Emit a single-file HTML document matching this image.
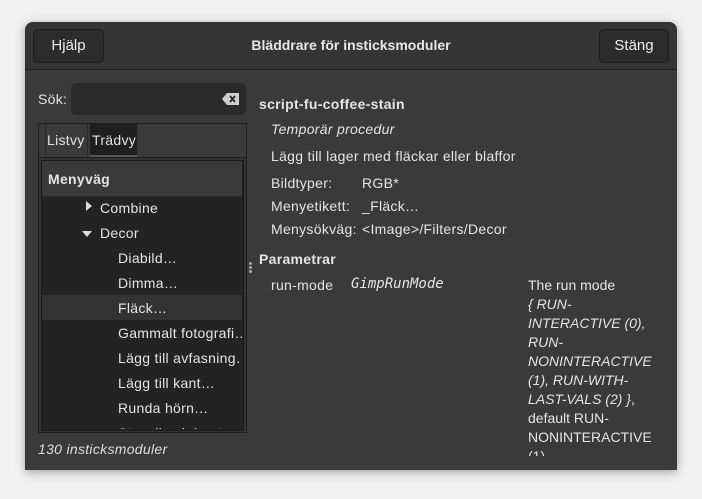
<!DOCTYPE html>
<html><head><meta charset="utf-8"><style>
body{margin:0;width:702px;height:499px;background:#f2f2f2;font-family:"Liberation Sans","DejaVu Sans",sans-serif;position:relative;overflow:hidden;color:#e4e4e4}
.win{position:absolute;left:25px;top:22px;width:652px;height:448px;background:#3a3a3a;border-radius:8px 8px 0 0;box-shadow:0 2px 10px rgba(0,0,0,.35);overflow:hidden}
.hdr{position:absolute;left:0;top:0;width:652px;height:47px;background:#353535;border-bottom:1px solid #1e1e1e}
.btn{position:absolute;top:7px;height:32px;border:1px solid #1c1c1c;border-radius:5px;background:#2c2c2c;font-size:15px;line-height:32px;text-align:center;color:#eee}
.title{position:absolute;left:0;right:0;top:15px;text-align:center;font-weight:bold;font-size:14px;color:#e8e8e8}
.a{position:absolute;white-space:nowrap}
.t{font-size:14px;letter-spacing:0.3px}
</style></head><body>
<div class="win">
<div class="hdr">
<div class="btn" style="left:8px;width:69px">Hjälp</div>
<div class="title">Bläddrare för insticksmoduler</div>
<div class="btn" style="left:574px;width:68px">Stäng</div>
</div>
<div class="a t" style="left:13px;top:69px">Sök:</div>
<div class="a" style="left:46px;top:61px;width:175px;height:32px;background:#2a2a2a;border-radius:5px"></div>
<svg class="a" style="left:197px;top:71px" width="17" height="12"><path d="M5 0H17V12H5L0 6Z" fill="#cfcfcf"/><path d="M8 3L13 9M13 3L8 9" stroke="#2a2a2a" stroke-width="1.8"/></svg>
<div class="a" style="left:13px;top:101px;width:207px;height:308px;border:1px solid #1e1e1e;background:#333"></div>
<div class="a" style="left:14px;top:102px;width:207px;height:33px;background:#3a3a3a;border-bottom:1px solid #1e1e1e"></div>
<div class="a" style="left:20px;top:102px;width:41px;height:33px;border-left:1px solid #2a2a2a;border-right:1px solid #2a2a2a"></div>
<div class="a t" style="left:22px;top:110px">Listvy</div>
<div class="a" style="left:65px;top:102px;width:47px;height:31px;background:#1f1f1f;border-bottom:2px solid #555"></div>
<div class="a t" style="left:67px;top:110px">Trädvy</div>
<div class="a" style="left:16px;top:138px;width:201px;height:269px;background:#232323;border:1px solid #1b1b1b"></div>
<div class="a" style="left:17px;top:139px;width:200px;height:35px;background:#3a3a3a;border-bottom:1px solid #2a2a2a"></div>
<div class="a t" style="left:23px;top:149px;font-weight:bold">Menyväg</div>
<div class="a" style="left:17px;top:273px;width:200px;height:25px;background:#333"></div>
<div style="position:absolute;left:17px;top:174px;width:200px;height:233px;overflow:hidden;font-size:14px;letter-spacing:0.3px">
<div class="a" style="left:44px;top:3px;width:0;height:0;border-left:6px solid #ddd;border-top:5px solid transparent;border-bottom:5px solid transparent;margin-top:2px"></div>
<div class="a" style="left:58px;top:4px">Combine</div>
<div class="a" style="left:40px;top:35px;width:0;height:0;border-top:6px solid #ddd;border-left:5px solid transparent;border-right:5px solid transparent"></div>
<div class="a" style="left:58px;top:29px">Decor</div>
<div class="a" style="left:76px;top:54px">Diabild…</div>
<div class="a" style="left:76px;top:79px">Dimma…</div>
<div class="a" style="left:76px;top:104px">Fläck…</div>
<div class="a" style="left:76px;top:129px">Gammalt fotografi…</div>
<div class="a" style="left:76px;top:154px">Lägg till avfasning…</div>
<div class="a" style="left:76px;top:179px">Lägg till kant…</div>
<div class="a" style="left:76px;top:204px">Runda hörn…</div>
<div class="a" style="left:76px;top:229px">Stencil och kanter</div>
</div>
<div class="a t" style="left:13px;top:419px;font-style:italic;color:#ddd">130 insticksmoduler</div>
<div class="a" style="left:224px;top:240px;width:3px;height:3px;border-radius:2px;background:#aaa;box-shadow:0 4px 0 #aaa,0 8px 0 #aaa"></div>
<div class="a t" style="left:234px;top:74px;font-weight:bold">script-fu-coffee-stain</div>
<div class="a t" style="left:246px;top:99px;font-style:italic">Temporär procedur</div>
<div class="a t" style="left:246px;top:126px">Lägg till lager med fläckar eller blaffor</div>
<div class="a t" style="left:246px;top:153px">Bildtyper:</div><div class="a t" style="left:337px;top:153px">RGB*</div>
<div class="a t" style="left:246px;top:176px">Menyetikett:</div><div class="a t" style="left:337px;top:176px">_Fläck…</div>
<div class="a t" style="left:246px;top:199px">Menysökväg:</div><div class="a t" style="left:337px;top:199px">&lt;Image&gt;/Filters/Decor</div>
<div class="a t" style="left:234px;top:229px;font-weight:bold">Parametrar</div>
<div class="a t" style="left:246px;top:255px">run-mode</div>
<div class="a" style="left:326px;top:254px;font-family:'DejaVu Sans Mono','Liberation Mono',monospace;font-style:italic;font-size:14px">GimpRunMode</div>
<div class="a" style="left:503px;top:254px;font-size:14px;line-height:19px;white-space:normal;width:130px;height:180px;overflow:hidden">The run mode<br><i>{ RUN-<br>INTERACTIVE (0),<br>RUN-<br>NONINTERACTIVE<br>(1), RUN-WITH-<br>LAST-VALS (2) }</i>,<br>default RUN-<br>NONINTERACTIVE<br>(1)</div>
</div>
</body></html>
